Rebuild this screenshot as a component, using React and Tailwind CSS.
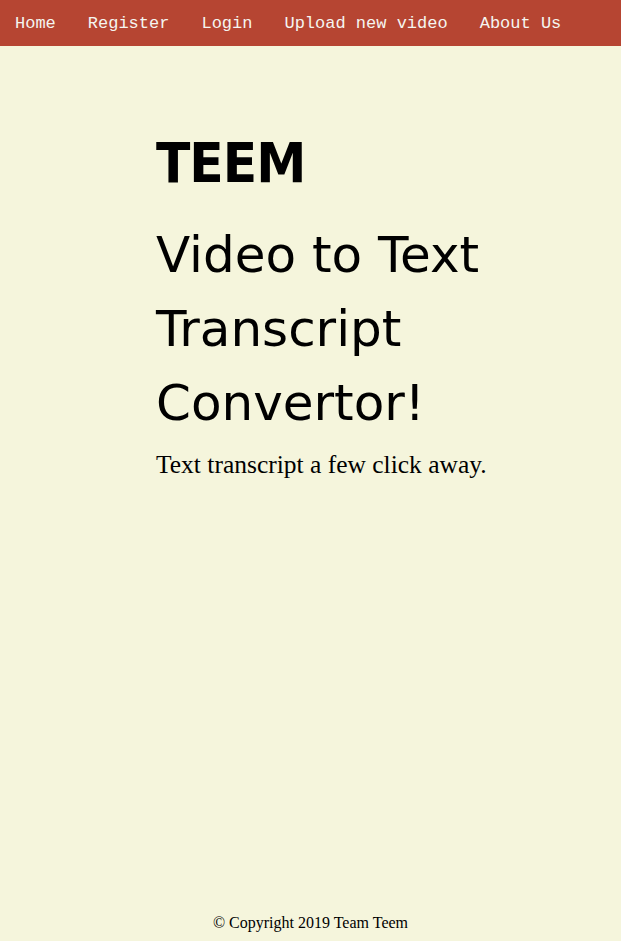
import React from 'react';

const links = ['Home', 'Register', 'Login', 'Upload new video', 'About Us'];

export default function App() {
  return (
    <div className="min-h-[941px] flex flex-col bg-[#f5f5dc] text-black">
      <nav className="h-[46px] bg-[#b64532] flex items-center pl-[15px] gap-[32px]">
        {links.map((l) => (
          <a key={l} className="text-[17px] text-[#f5f5f0] font-['Liberation_Mono',monospace] leading-none">
            {l}
          </a>
        ))}
      </nav>

      <main className="flex-1 pl-[156px] pt-[84px]">
        <div className="w-[360px]">
          <h1 className="text-[56px] font-bold leading-[66px] tracking-[-1px] font-['DejaVu_Sans_Condensed','DejaVu_Sans',sans-serif]">
            TEEM
          </h1>
          <h2 className="text-[50px] leading-[74px] mt-[22px] font-['DejaVu_Sans',sans-serif]">
            Video to Text Transcript Convertor!
          </h2>
        </div>
        <p className="font-['Liberation_Serif',serif] text-[25.5px] leading-[30px] mt-[10px]">
          Text transcript a few click away.
        </p>
      </main>

      <footer className="text-center font-['Liberation_Serif',serif] text-[16px] pb-[6px]">
        © Copyright 2019 Team Teem
      </footer>
    </div>
  );
}
